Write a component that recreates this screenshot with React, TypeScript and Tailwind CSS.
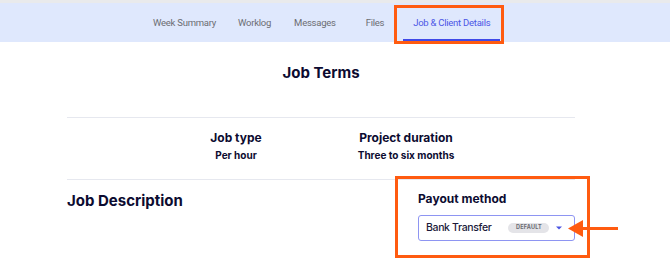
import React from "react";

const tabs = [
  { label: "Week Summary", cls: "ml-[153px]" },
  { label: "Worklog", cls: "ml-[22px]" },
  { label: "Messages", cls: "ml-[23px]" },
  { label: "Files", cls: "ml-[30px]" },
];

export default function App() {
  return (
    <div className="relative w-[670px] h-[262px] bg-white overflow-hidden" style={{ fontFamily: "Inter, 'Noto Sans', sans-serif" }}>
      <div className="h-[3px] bg-[#e9eaec]" />
      <nav className="h-[39px] bg-[#dfe8fd] flex items-stretch" style={{ fontFamily: "Roboto, 'Liberation Sans', sans-serif" }}>
        {tabs.map((t) => (
          <div key={t.label} className={`${t.cls} flex items-center pt-[1px] text-[9.5px] tracking-[-0.25px] text-[#6c6d72] whitespace-nowrap`}>
            {t.label}
          </div>
        ))}
        <div className="ml-[19px] w-[97px] flex items-center justify-center text-[9.5px] tracking-[-0.25px] text-[#4c56e6] border-b-[3px] border-[#3f49e8] pt-[4px] whitespace-nowrap">
          Job &amp; Client Details
        </div>
      </nav>
      {/* annotation box around tab */}
      <div className="absolute left-[394px] top-[5px] w-[110px] h-[39px] border-[3px] border-[#ff5b10]" />

      <main className="ml-[67px] w-[508px] text-[#0c0b30]">
        <h1 className="mt-[20px] text-center text-[15px] leading-[22px] font-bold">Job Terms</h1>
        <div className="mt-[33px] h-px bg-[#e6e8ef]" />
        <div className="flex justify-center mt-[12px]">
          <div className="w-[170px] text-center">
            <div className="text-[12px] leading-[16px] font-bold">Job type</div>
            <div className="text-[10px] leading-[14px] font-bold mt-[2px]">Per hour</div>
          </div>
          <div className="w-[170px] text-center">
            <div className="text-[12px] leading-[16px] font-bold">Project duration</div>
            <div className="text-[10px] leading-[14px] font-bold mt-[2px]">Three to six months</div>
          </div>
        </div>
        <div className="mt-[17px] h-px bg-[#e6e8ef]" />
        <div className="flex justify-between">
          <h2 className="mt-[10px] text-[15px] leading-[22px] font-bold">Job Description</h2>
          <div className="w-[157px] pt-[11px]">
            <div className="text-[12px] leading-[16px] font-bold">Payout method</div>
            <div className="mt-[8px] h-[26px] border border-[#8e95f2] rounded-[3px] flex items-center pl-[7px] pr-[12px]">
              <span className="text-[10.5px] tracking-[-0.35px] font-medium text-[#1b1a3a] whitespace-nowrap">Bank Transfer</span>
              <span className="ml-[17px] shrink-0 h-[10px] w-[41px] rounded-full bg-[#e4e4e8] flex items-center justify-center text-[5.5px] leading-none font-bold text-[#6b6b72] tracking-[0.2px]">DEFAULT</span>
              <svg className="ml-auto shrink-0" width="6" height="4" viewBox="0 0 6 4"><path d="M0 0.5 L6 0.5 L3 3.5 Z" fill="#4a54e2" /></svg>
            </div>
          </div>
        </div>
      </main>

      {/* annotation box around payout */}
      <div className="absolute left-[395px] top-[176px] w-[195px] h-[82px] border-[3px] border-[#ff5b10]" />
      {/* arrow */}
      <svg className="absolute left-[566px] top-[218px]" width="54" height="21" viewBox="0 0 54 21">
        <path d="M2 10.5 L17 2 L17 19 Z" fill="#ff5b10" />
        <rect x="16" y="9" width="36" height="3" fill="#ff5b10" />
      </svg>
    </div>
  );
}
